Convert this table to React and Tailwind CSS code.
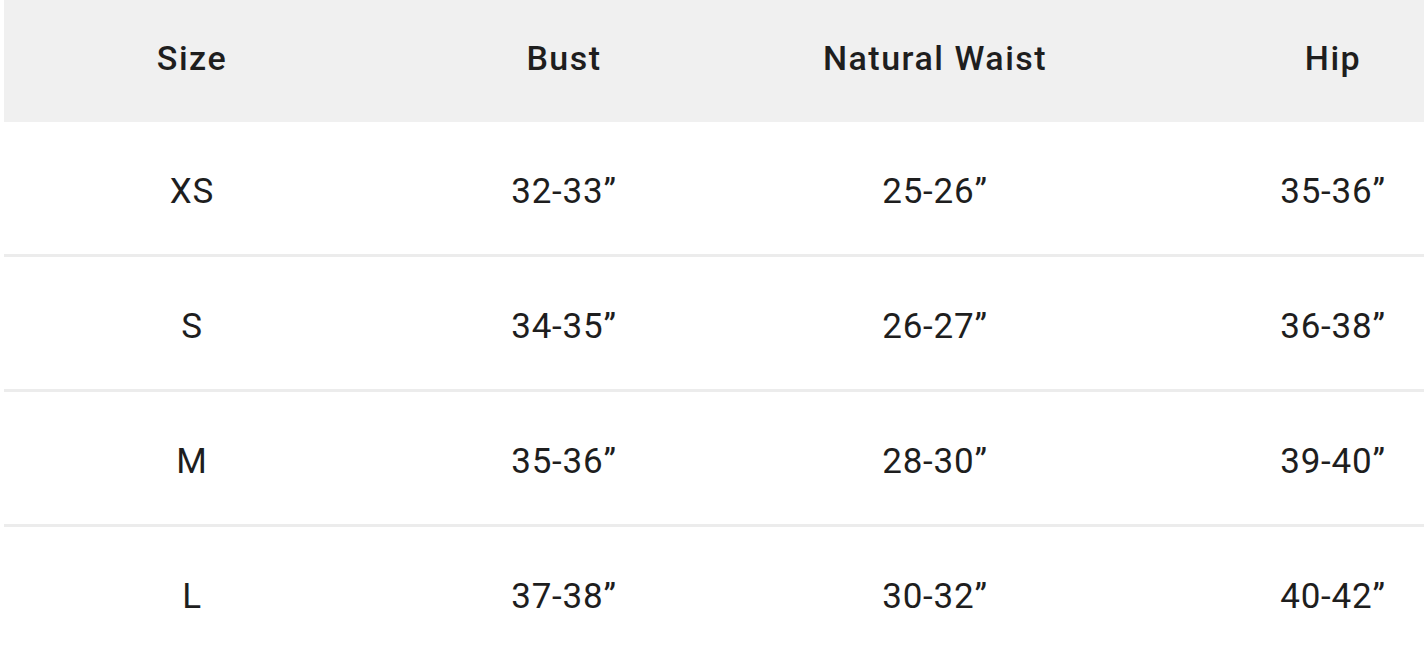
const rows = [
  ["XS", "32-33\u201D", "25-26\u201D", "35-36\u201D"],
  ["S", "34-35\u201D", "26-27\u201D", "36-38\u201D"],
  ["M", "35-36\u201D", "28-30\u201D", "39-40\u201D"],
  ["L", "37-38\u201D", "30-32\u201D", "40-42\u201D"],
];

const headers = ["Size", "Bust", "Natural Waist", "Hip"];

export default function App() {
  return (
    <div className="w-[1424px] h-[650px] overflow-hidden bg-white pl-[4px] font-['Roboto',sans-serif] text-[#1e1e1e]">
      <div className="w-[1540px]">
        <div className="grid grid-cols-[376px_368px_374px_422px] h-[122px] pb-[6px] items-center bg-[#f0f0f0] text-[34px] font-medium tracking-[1.5px]">
          {headers.map((h) => (
            <div key={h} className="text-center">{h}</div>
          ))}
        </div>
        {rows.map((r, i) => (
          <div
            key={i}
            className="grid grid-cols-[376px_368px_374px_422px] h-[135px] pt-[8px] items-center border-b-[3px] border-[#ececec] text-[35px] tracking-[0.8px]"
          >
            {r.map((c, j) => (
              <div key={j} className="text-center">{c}</div>
            ))}
          </div>
        ))}
      </div>
    </div>
  );
}
